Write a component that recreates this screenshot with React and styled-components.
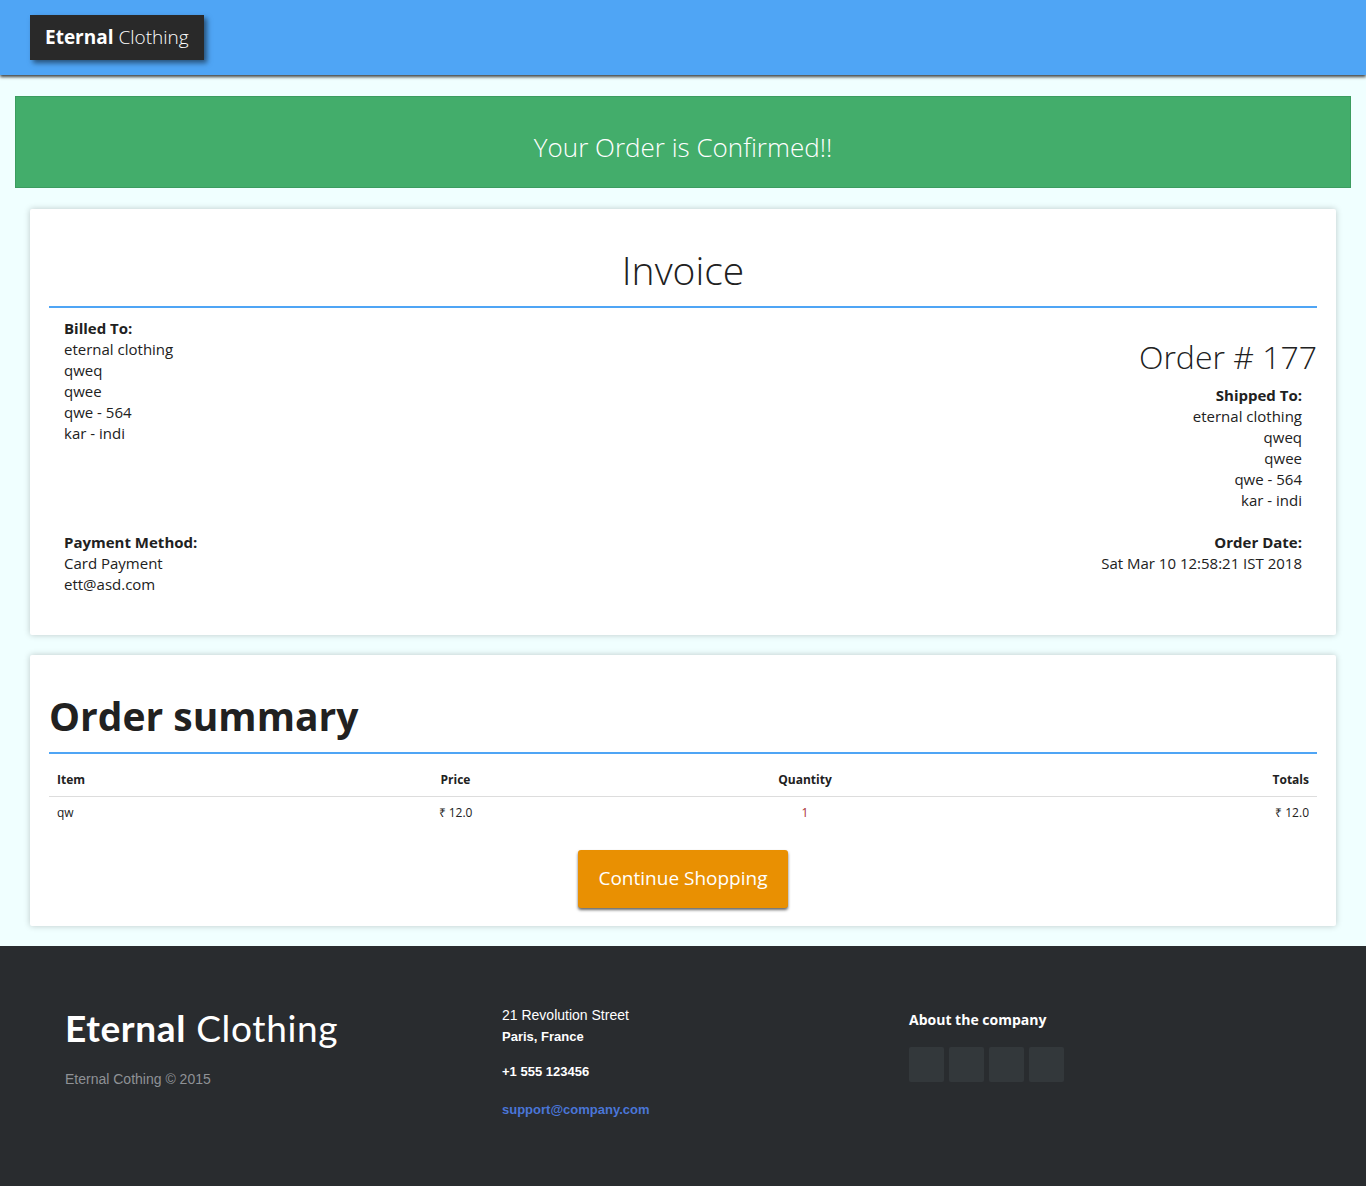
import React from "react";
import styled, { createGlobalStyle } from "styled-components";

const Global = createGlobalStyle`
  html, body { margin: 0; padding: 0; }
  body { background: #f0ffff; font-family: "Open Sans", sans-serif; color: #212121; font-size: 15px; line-height: 21px; }
  * { box-sizing: border-box; }
`;

const Page = styled.div`
  width: 1366px;
  height: 1186px;
  display: flex;
  flex-direction: column;
  overflow: hidden;
`;
const Header = styled.header`
  height: 75px;
  background: #4fa5f5;
  box-shadow: 0 2px 3px rgba(0, 0, 0, 0.75);
  padding: 15px 30px;
  flex: none;
`;
const Brand = styled.div`
  display: inline-flex;
  align-items: center;
  width: 174px;
  height: 45px;
  padding: 0 0 0 15px;
  background: #292929;
  color: #fff;
  font-size: 19px;
  font-weight: 300;
  white-space: pre;
  box-shadow: 3px 3px 5px rgba(0, 0, 0, 0.5);
  b { font-weight: 700; }
`;
const Alert = styled.div`
  margin: 21px 15px 21px;
  height: 92px;
  background: #43ad6b;
  border: 1px solid #3c9c60;
  color: #fff;
  font-size: 26px;
  font-weight: 300;
  display: flex;
  align-items: center;
  justify-content: center;
  padding-top: 10px;
`;
const Card = styled.section`
  margin: 0 30px 20px;
  height: ${(p) => p.$h}px;
  flex: none;
  background: #fff;
  border-radius: 2px;
  box-shadow: 0 0 6px rgba(0, 0, 0, 0.22);
  padding: 0 19px;
`;
const InvoiceTitle = styled.h1`
  margin: 0;
  padding-top: 35px;
  height: 99px;
  border-bottom: 2px solid #4fa5f5;
  font-size: 39px;
  line-height: 52px;
  font-weight: 300;
  text-align: center;
`;
const AddressRow = styled.div`
  display: flex;
  justify-content: space-between;
  padding: 0 15px;
`;
const Address = styled.div`
  text-align: ${(p) => (p.$right ? "right" : "left")};
  strong { font-weight: 700; display: block; }
`;
const RightColumn = styled.div`
  display: flex;
  flex-direction: column;
  align-items: flex-end;
`;
const OrderNumber = styled.div`
  margin: 21px -15px 10px 0;
  font-size: 32px;
  line-height: 36px;
  font-weight: 300;
`;
const TopRow = styled(AddressRow)`
  height: 224px;
  padding-top: 10px;
`;
const SummaryTitle = styled.h2`
  margin: 0;
  padding-top: 35px;
  height: 99px;
  border-bottom: 2px solid #4fa5f5;
  font-size: 39px;
  line-height: 52px;
  font-weight: 700;
`;
const Table = styled.table`
  width: 100%;
  table-layout: fixed;
  border-collapse: collapse;
  font-size: 12px;
  line-height: 17px;
`;
const Th = styled.th`
  height: 42px;
  padding: 10px 8px 0;
  border-bottom: 1px solid #ddd;
  font-weight: 700;
  text-align: ${(p) => p.$a || "left"};
`;
const Td = styled.td`
  height: 33px;
  padding: 0 8px;
  text-align: ${(p) => p.$a || "left"};
  color: ${(p) => p.$c || "inherit"};
`;
const Center = styled.div`
  display: flex;
  justify-content: center;
  margin-top: 21px;
`;
const Button = styled.button`
  width: 210px;
  height: 58px;
  padding: 0 0 3px;
  border: 0;
  border-radius: 3px;
  background: #e99002;
  color: #fff;
  font: 400 19px "Open Sans", sans-serif;
  box-shadow: 0 2px 3px rgba(0, 0, 0, 0.6);
`;
const Footer = styled.footer`
  flex: 1;
  background: #292c2f;
  padding: 50px 65px 0;
  display: grid;
  grid-template-columns: 437px 407px 1fr;
  font-family: "Liberation Sans", Arial, sans-serif;
  font-size: 14px;
`;
const Logo = styled.div`
  font-family: "Comic Sans MS", "Lato", sans-serif;
  font-size: 37px;
  line-height: 66px;
  letter-spacing: 0.65px;
  color: #fff;
  margin-top: -1px;
  b { font-weight: 700; }
`;
const Copy = styled.p`
  margin: 8px 0 0;
  color: #8f9296;
`;
const Contact = styled.div`
  font-weight: ${(p) => (p.$normal ? 400 : 700)};
  font-size: ${(p) => (p.$normal ? 14 : 13)}px;
  line-height: 21px;
  margin-top: ${(p) => p.$mt || 0}px;
  color: ${(p) => p.$c || "#fff"};
`;
const About = styled.div`
  font-family: "Open Sans", sans-serif;
  font-weight: 700;
  color: #fff;
  font-size: 14px;
  line-height: 20px;
  margin-top: 14px;
`;
const Socials = styled.div`
  display: flex;
  gap: 5px;
  margin-top: 17px;
`;
const Social = styled.div`
  width: 35px;
  height: 35px;
  border-radius: 2px;
  background: #33383b;
`;

export default function App() {
  return (
    <Page>
      <Global />
      <Header>
        <Brand><b>Eternal</b> Clothing</Brand>
      </Header>
      <Alert>Your Order is Confirmed!!</Alert>
      <Card $h={426}>
        <InvoiceTitle>Invoice</InvoiceTitle>
        <TopRow>
          <Address>
            <strong>Billed To:</strong>
            eternal clothing<br />qweq<br />qwee<br />qwe - 564<br />kar - indi
          </Address>
          <RightColumn>
            <OrderNumber>Order # 177</OrderNumber>
            <Address $right>
              <strong>Shipped To:</strong>
              eternal clothing<br />qweq<br />qwee<br />qwe - 564<br />kar - indi
            </Address>
          </RightColumn>
        </TopRow>
        <AddressRow>
          <Address>
            <strong>Payment Method:</strong>
            Card Payment<br />ett@asd.com
          </Address>
          <Address $right>
            <strong>Order Date:</strong>
            Sat Mar 10 12:58:21 IST 2018
          </Address>
        </AddressRow>
      </Card>
      <Card $h={271}>
        <SummaryTitle>Order summary</SummaryTitle>
        <Table>
          <colgroup>
            <col style={{ width: 232 }} />
            <col style={{ width: 349 }} />
            <col style={{ width: 350 }} />
            <col style={{ width: 337 }} />
          </colgroup>
          <thead>
            <tr>
              <Th>Item</Th>
              <Th $a="center">Price</Th>
              <Th $a="center">Quantity</Th>
              <Th $a="right">Totals</Th>
            </tr>
          </thead>
          <tbody>
            <tr>
              <Td>qw</Td>
              <Td $a="center">₹ 12.0</Td>
              <Td $a="center" $c="#a33">1</Td>
              <Td $a="right">₹ 12.0</Td>
            </tr>
          </tbody>
        </Table>
        <Center><Button>Continue Shopping</Button></Center>
      </Card>
      <Footer>
        <div>
          <Logo><b>Eternal</b> Clothing</Logo>
          <Copy>Eternal Cothing © 2015</Copy>
        </div>
        <div>
          <Contact $normal $mt={9}>21 Revolution Street</Contact>
          <Contact>Paris, France</Contact>
          <Contact $mt={14}>+1 555 123456</Contact>
          <Contact $mt={17} $c="#4a76d8">support@company.com</Contact>
        </div>
        <div>
          <About>About the company</About>
          <Socials><Social /><Social /><Social /><Social /></Socials>
        </div>
      </Footer>
    </Page>
  );
}
